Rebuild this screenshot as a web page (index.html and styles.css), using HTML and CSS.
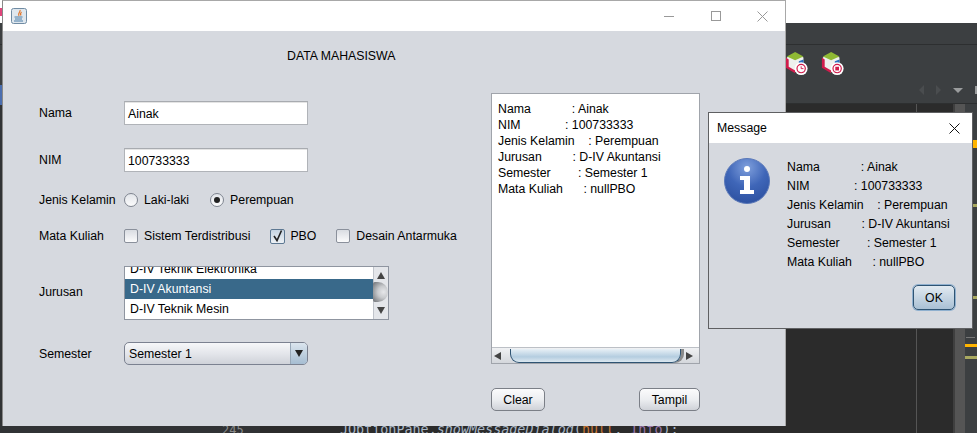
FILE: index.html
```html
<!DOCTYPE html>
<html lang="en">
<head>
    <title>Data Mahasiswa</title>
    <link rel="stylesheet" href="styles.css">
</head>
<body>

    <!-- IDE behind the windows -->
    <div class="ide">
        <div class="ide-top"></div>
        <div class="ide-toolbar"></div>
        <div class="ide-tools">
            <svg class="cube" viewBox="0 0 26 26"><use href="#cube"/><circle cx="17.500" cy="18" r="7" fill="#fff"/><circle cx="17.500" cy="18" r="4.500" fill="none" stroke="#d01c4c" stroke-width="1.300"/><path d="M17.500 15.500V18H20" fill="none" stroke="#d01c4c"/></svg>
            <svg class="cube" viewBox="0 0 26 26"><use href="#cube"/><circle cx="17.500" cy="18" r="7" fill="#fff"/><circle cx="17.500" cy="18" r="4.500" fill="none" stroke="#d01c4c" stroke-width="1.300"/><rect x="15.500" y="16" width="4" height="4" fill="#d01c4c"/></svg>
        </div>
        <div class="ide-nav">
            <span class="nav-left"></span>
            <span class="nav-right"></span>
            <span class="nav-down"></span>
            <span class="nav-box"></span>
        </div>
        <div class="ide-editor">
            <div class="gutter"><span class="line-no">245</span></div>
            <div class="code"><span>JOptionPane.<i>showMessageDialog</i>(<b>null</b>, <em>Info</em>);</span></div>
            <div class="ide-scroll"></div>
            <div class="ide-marks">
                <span class="mark orange m1"></span>
                <span class="mark olive m2"></span>
                <span class="mark olive m3"></span>
                <span class="mark grey m6"></span>
                <span class="mark orange m4"></span>
                <span class="mark olive m5"></span>
            </div>
        </div>
        <span class="edge edge-pink"></span>
        <span class="edge edge-blue"></span>
    </div>

    <svg class="defs" width="0" height="0">
        <symbol id="cube" viewBox="0 0 26 26">
            <path d="M11 1L20 6V16L11 22L2 16V6Z" fill="#eef0ee"/>
            <path d="M11 0L20 5L11 9L2 5Z" fill="#8fb934"/>
            <path d="M1 6L4 8V16L11 20V23L1 17Z" fill="#d01c4c"/>
            <path d="M20 8L15 10V19L20 16Z" fill="#2a6fc0"/>
        </symbol>
    </svg>

    <!-- main frame -->
    <div class="window main-window">
        <div class="titlebar">
            <svg class="java-icon" width="16" height="16" viewBox="0 0 16 16">
                <rect x="0.500" y="0.500" width="15" height="15" rx="2" fill="#dfe7ee" stroke="#6f8ba3"/>
                <path d="M9 2C10 4 6 5 8 8M10.500 4C9.500 5 9 6 10 7.500" fill="none" stroke="#e2762b" stroke-width="1.200"/>
                <path d="M3.500 9H11.500M4 11H11M3 13H12" stroke="#4d7ea8"/>
            </svg>
            <div class="win-buttons">
                <span class="win-min"></span>
                <span class="win-max"></span>
                <svg class="win-close" width="11" height="11" viewBox="0 0 11 11"><path d="M0.500 0.500L10.500 10.500M10.500 0.500L0.500 10.500" stroke="#999" fill="none"/></svg>
            </div>
        </div>
        <div class="main-body">
            <div class="form-col">
                <div class="form-title">DATA MAHASISWA</div>

                <div class="row row-nama">
                    <label>Nama</label>
                    <div class="field">Ainak</div>
                </div>
                <div class="row row-nim">
                    <label>NIM</label>
                    <div class="field">100733333</div>
                </div>
                <div class="row row-jk">
                    <label>Jenis Kelamin</label>
                    <span class="radio"></span><span class="opt opt-laki">Laki-laki</span>
                    <span class="radio checked"></span><span class="opt">Perempuan</span>
                </div>
                <div class="row row-mk">
                    <label>Mata Kuliah</label>
                    <span class="check"></span><span class="opt opt-sistem">Sistem Terdistribusi</span>
                    <span class="check checked">
                        <svg width="13" height="13" viewBox="0 0 13 13"><path d="M3 6L6 10.500L10.500 0.500" fill="none" stroke="#222" stroke-width="1.600"/></svg>
                    </span><span class="opt opt-pbo">PBO</span>
                    <span class="check"></span><span class="opt">Desain Antarmuka</span>
                </div>
                <div class="row row-jurusan">
                    <label>Jurusan</label>
                    <div class="listbox">
                        <div class="list-items">
                            <div class="list-item cut">D-IV Teknik Elektronika</div>
                            <div class="list-item selected">D-IV Akuntansi</div>
                            <div class="list-item">D-IV Teknik Mesin</div>
                        </div>
                        <div class="vscroll">
                            <span class="arrow-up"></span>
                            <span class="sphere"></span>
                            <span class="arrow-down"></span>
                        </div>
                    </div>
                </div>
                <div class="row row-semester">
                    <label>Semester</label>
                    <div class="combo">
                        <span class="combo-text">Semester 1</span>
                        <span class="combo-btn"><span class="arrow-down small"></span></span>
                    </div>
                </div>
            </div>

            <div class="output-col">
                <div class="output">
<pre class="output-text">Nama            : Ainak
NIM             : 100733333
Jenis Kelamin    : Perempuan
Jurusan         : D-IV Akuntansi
Semester        : Semester 1
Mata Kuliah      : nullPBO</pre>
                    <div class="hscroll">
                        <span class="arrow-left"></span>
                        <span class="hthumb"></span>
                        <span class="arrow-right"></span>
                    </div>
                </div>
                <div class="actions">
                    <button type="button" class="btn btn-clear">Clear</button>
                    <button type="button" class="btn btn-tampil">Tampil</button>
                </div>
            </div>
        </div>
    </div>

    <!-- message dialog -->
    <div class="window dialog">
        <div class="titlebar dialog-title">
            <span>Message</span>
            <svg width="11" height="11" viewBox="0 0 11 11"><path d="M0.500 0.500L10.500 10.500M10.500 0.500L0.500 10.500" stroke="#111" fill="none"/></svg>
        </div>
        <div class="dialog-body">
            <svg class="info-icon" width="46" height="46" viewBox="0 0 46 46">
                <defs>
                    <radialGradient id="infoFill" cx="50%" cy="20%" r="85%">
                        <stop offset="0" stop-color="#7f9fdc"/>
                        <stop offset="0.5" stop-color="#3f66b8"/>
                        <stop offset="1" stop-color="#2b4f9e"/>
                    </radialGradient>
                </defs>
                <circle cx="23" cy="23" r="22.500" fill="url(#infoFill)" stroke="#5a78b8"/>
                <circle cx="23" cy="11" r="3" fill="#fff"/>
                <path d="M16 18H26V32H30V36H16V32H20V22H16Z" fill="#fff"/>
            </svg>
<pre class="dialog-text">Nama            : Ainak
NIM             : 100733333
Jenis Kelamin    : Perempuan
Jurusan         : D-IV Akuntansi
Semester        : Semester 1
Mata Kuliah      : nullPBO</pre>
        </div>
        <div class="dialog-actions">
            <button type="button" class="btn-ok">OK</button>
        </div>
    </div>

</body>
</html>
```

FILE: styles.css
```css
html, body {
    margin: 0;
    padding: 0;
}
body {
    width: 977px;
    height: 433px;
    overflow: hidden;
    position: relative;
    background-color: #3c3f41;
    font-family: "Liberation Sans", Arial, sans-serif;
    font-size: 12.3px;
    color: #000;
}
.defs {
    position: absolute;
}

/* ide */
.ide {
    position: absolute;
    left: 0;
    top: 0;
    width: 977px;
    height: 433px;
    overflow: hidden;
}
.ide-top {
    height: 23px;
    background-color: #fff;
}
.ide-toolbar {
    height: 21px;
    background-color: #3c3f41;
    border-bottom: 1px solid #2d2f30;
}
.ide-tools {
    display: flex;
    gap: 12px;
    height: 32px;
    padding: 6px 0 0 785px;
    box-sizing: border-box;
}
.cube {
    width: 24px;
    height: 26px;
}
.ide-nav {
    display: flex;
    align-items: center;
    gap: 12px;
    height: 27px;
    padding-left: 919px;
    box-sizing: border-box;
    border-bottom: 1px solid #2d2f30;
}
.nav-left {
    border: 5px solid transparent;
    border-left: 0;
    border-right: 5px solid #4a4d4f;
}
.nav-right {
    border: 5px solid transparent;
    border-right: 0;
    border-left: 5px solid #4a4d4f;
}
.nav-down {
    border: 5px solid transparent;
    border-bottom: 0;
    border-top: 5px solid #9a9c9d;
}
.nav-box {
    width: 8px;
    height: 6px;
    border: 1px solid #9a9c9d;
}
.ide-editor {
    height: 329px;
    display: flex;
    background-color: #2b2b2b;
}
.gutter {
    width: 260px;
    background-color: #313335;
    position: relative;
}
.line-no {
    position: absolute;
    left: 222px;
    top: 319px;
    font-family: "DejaVu Sans Mono", monospace;
    font-size: 12px;
    color: #888;
}
.code {
    flex: 1;
    position: relative;
    font-family: "DejaVu Sans Mono", monospace;
    font-size: 13.4px;
    color: #a9b7c6;
}
.code::after {
    content: "";
    position: absolute;
    left: 656px;
    top: 0;
    bottom: 0;
    width: 1px;
    background-color: #555;
}
.code span {
    position: absolute;
    left: 80px;
    top: 318px;
    white-space: pre;
}
.code b {
    font-weight: normal;
    color: #cc7832;
}
.code em {
    font-style: normal;
    color: #9876aa;
}
.ide-scroll {
    width: 10px;
    background-color: #555;
    border-left: 2px solid #3f3f3f;
}
.ide-marks {
    width: 12px;
    background-color: #3c3f41;
    position: relative;
}
.mark {
    position: absolute;
    left: 0;
    width: 12px;
    height: 3px;
}
.orange { background-color: #ffb400; }
.olive { background-color: #a9a960; }
.grey { background-color: #777; }
.m1 { top: 36px; height: 8px; }
.m2 { top: 100px; }
.m3 { top: 192px; }
.m4 { top: 240px; }
.m5 { top: 252px; }
.m6 { top: 233px; height: 1px; width: 9px; left: 1px; }
.edge {
    position: absolute;
    left: 0;
    width: 2px;
}
.edge-pink {
    top: 8px;
    height: 8px;
    background-color: #e0457b;
}
.edge-blue {
    top: 85px;
    height: 20px;
    background-color: #4b6eaf;
}

/* windows */
.window {
    position: absolute;
    box-sizing: border-box;
    background-color: #d6d9df;
}
.titlebar {
    display: flex;
    align-items: center;
    background-color: #fff;
    height: 30px;
}
.main-window {
    left: 2px;
    top: 0;
    width: 784px;
    height: 426px;
    border: 1px solid #a8a8a8;
    border-bottom: 0;
    border-left-color: #888;
}
.java-icon {
    margin-left: 8px;
}
.win-buttons {
    margin-left: auto;
    display: flex;
    align-items: center;
    padding-right: 17px;
}
.win-min {
    width: 10px;
    height: 1px;
    background-color: #999;
    margin-right: 37px;
}
.win-max {
    width: 8px;
    height: 8px;
    border: 1px solid #999;
    margin-right: 36px;
}
.main-body {
    display: flex;
}
.form-col {
    width: 452px;
    padding: 18px 0 0 36px;
}
.form-title {
    line-height: 14px;
    padding-left: 248px;
    white-space: nowrap;
}
.row {
    display: flex;
    align-items: center;
    white-space: nowrap;
}
.row label {
    width: 85px;
    flex-shrink: 0;
}
.row-nama { margin-top: 38px; }
.row-nim { margin-top: 23px; }
.row-jk { margin-top: 20px; height: 16px; }
.row-mk { margin-top: 20px; height: 16px; }
.row-jurusan { margin-top: 22px; }
.row-jurusan label { margin-bottom: 2px; }
.row-semester { margin-top: 22px; }
.field {
    width: 184px;
    height: 24px;
    line-height: 24px;
    box-sizing: border-box;
    padding-left: 3px;
    background-color: #fff;
    border: 1px solid #b0b3b8;
    border-top-color: #a8abb0;
    box-shadow: inset 0 1px 0 #e4e4e4;
}
.radio {
    width: 12px;
    height: 12px;
    border-radius: 50%;
    border: 1px solid #7f8590;
    background: linear-gradient(#e2e5ea, #fbfbfc);
    margin-right: 6px;
    position: relative;
    flex-shrink: 0;
}
.radio.checked::after {
    content: "";
    position: absolute;
    left: 3px;
    top: 3px;
    width: 6px;
    height: 6px;
    border-radius: 50%;
    background-color: #222;
}
.opt-laki {
    margin-right: 21px;
}
.check {
    width: 12px;
    height: 12px;
    border: 1px solid #8a909b;
    border-radius: 2px;
    background: linear-gradient(#d9dce2, #fbfbfc);
    margin-right: 6px;
    flex-shrink: 0;
}
.check svg {
    display: block;
}
.check.checked {
    width: 13px;
    height: 13px;
    margin-right: 5px;
    background: linear-gradient(#c6d4e2, #edf1f5);
    border-color: #5d7892;
}
.opt-sistem {
    margin-right: 20px;
}
.opt-pbo {
    margin-right: 20px;
}
.listbox {
    width: 265px;
    height: 54px;
    box-sizing: border-box;
    border: 1px solid #8f95a0;
    background-color: #fff;
    display: flex;
    position: relative;
}
.list-items {
    flex: 1;
    overflow: hidden;
}
.list-item {
    height: 20px;
    line-height: 21px;
    padding-left: 5px;
}
.list-item.cut {
    height: 12px;
    line-height: 5px;
}
.list-item.selected {
    background-color: #39698a;
    color: #fff;
}
.vscroll {
    width: 15px;
    background-color: #e4e6ea;
    border-left: 1px solid #c0c4cb;
    display: flex;
    flex-direction: column;
    align-items: center;
    justify-content: space-between;
    padding: 5px 0 5px;
    box-sizing: border-box;
    position: relative;
}
.arrow-up {
    border: 4px solid transparent;
    border-top: 0;
    border-bottom: 7px solid #444;
}
.arrow-down {
    border: 4px solid transparent;
    border-bottom: 0;
    border-top: 7px solid #444;
}
.arrow-down.small {
    border-width: 7px 4px 0;
    border-top-color: #222;
}
.sphere {
    position: absolute;
    left: -1px;
    top: 15px;
    width: 15px;
    height: 20px;
    border-radius: 2px 10px 10px 2px;
    background: radial-gradient(circle at 70% 50%, #e6e7ea 0%, #c8cacd 40%, #6c6e72 100%);
}
.combo {
    width: 184px;
    height: 23px;
    box-sizing: border-box;
    border: 1px solid #7b8190;
    border-radius: 5px;
    background: linear-gradient(#f6f7f9 0%, #e4e6eb 50%, #cfd2d9 100%);
    display: flex;
    align-items: center;
    overflow: hidden;
}
.combo-text {
    padding-left: 4px;
    flex: 1;
}
.combo-btn {
    width: 16px;
    height: 100%;
    display: flex;
    align-items: center;
    justify-content: center;
    border-left: 1px solid #98a8b8;
    background: linear-gradient(#dbe5ee, #a6bdd2);
}
.output-col {
    width: 209px;
    padding-top: 62px;
}
.output {
    height: 271px;
    box-sizing: border-box;
    border: 1px solid #a0a4ab;
    background-color: #fff;
    display: flex;
    flex-direction: column;
}
.output-text {
    flex: 1;
    margin: 0;
    padding: 7px 0 0 6px;
    font: inherit;
    line-height: 16px;
}
.hscroll {
    height: 15px;
    background: linear-gradient(#f0f1f3, #d4d7dc);
    border-top: 1px solid #bcc0c6;
    display: flex;
    align-items: center;
    padding: 0 2px;
}
.arrow-left {
    border: 4px solid transparent;
    border-left: 0;
    border-right: 7px solid #444;
}
.arrow-right {
    border: 4px solid transparent;
    border-right: 0;
    border-left: 7px solid #444;
}
.hthumb {
    width: 171px;
    height: 14px;
    box-sizing: border-box;
    margin: 0 5px 0 9px;
    border: 1px solid #2f5473;
    border-top: 0;
    border-radius: 0 0 9px 9px;
    background: linear-gradient(#e8f0f6, #b4cde0 60%, #dce8f0);
    box-shadow: 3px 0 0 #8a8a8a;
}
.actions {
    display: flex;
    justify-content: space-between;
    margin-top: 24px;
}
.btn {
    height: 23px;
    padding: 0;
    font: inherit;
    color: #000;
    border: 1px solid #7b7f87;
    border-radius: 5px;
    background: linear-gradient(#fbfbfc 0%, #eceef1 50%, #cfd2d8 100%);
}
.btn-clear {
    width: 54px;
}
.btn-tampil {
    width: 61px;
}

/* dialog */
.dialog {
    left: 708px;
    top: 112px;
    width: 265px;
    height: 217px;
    border: 1px solid #5f6062;
}
.dialog-title {
    padding: 0 12px 0 8px;
    justify-content: space-between;
}
.dialog-body {
    display: flex;
    padding: 15px 0 0 15px;
}
.dialog-text {
    margin: 0 0 0 17px;
    font: inherit;
    line-height: 19px;
}
.dialog-actions {
    display: flex;
    justify-content: flex-end;
    padding: 0 17px 0 0;
    margin-top: 13px;
}
.btn-ok {
    width: 42px;
    height: 25px;
    padding: 0;
    font: inherit;
    color: #000;
    border: 1px solid #2f5473;
    border-radius: 5px;
    background: linear-gradient(#e2eaf1, #a9c0d4);
    box-shadow: 0 0 0 1px #8fb0cf;
}
```
